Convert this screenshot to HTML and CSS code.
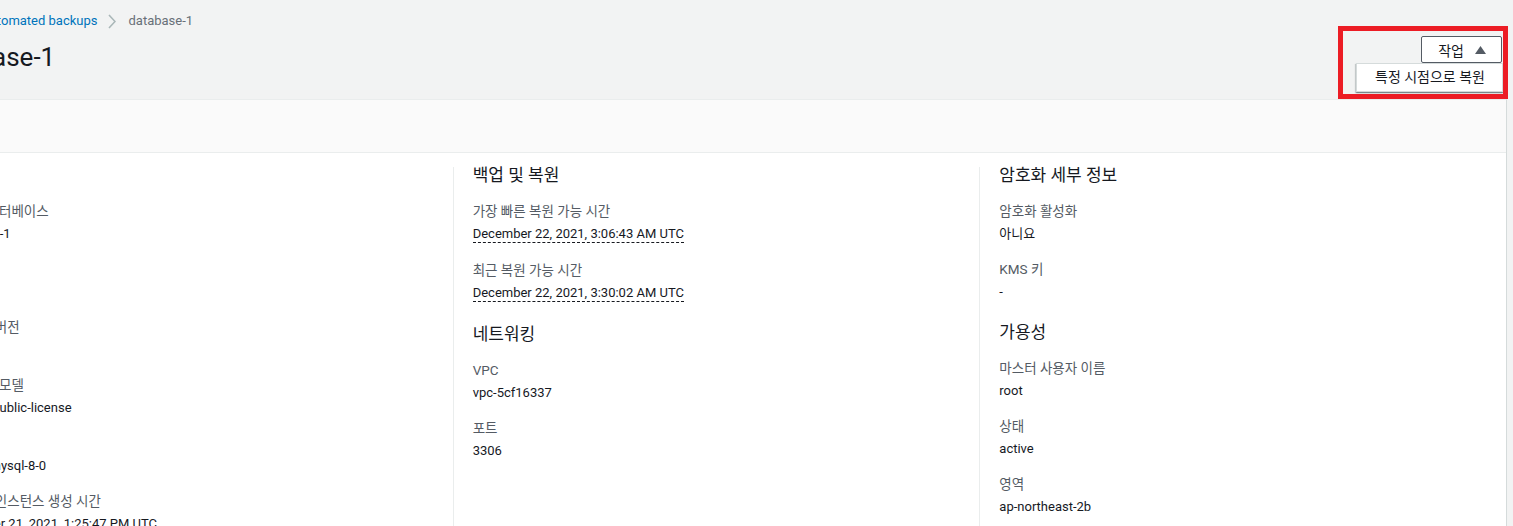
FILE: index.html
```html
<!DOCTYPE html>
<html lang="ko">
<head>
    <meta charset="UTF-8">
    <meta name="viewport" content="width=device-width, initial-scale=1.0">
    <title>database-1 - Automated backups</title>
    <link rel="stylesheet" href="styles.css">
</head>
<body>
<div class="page">

    <!-- Page header: breadcrumbs, title and actions -->
    <header class="page-header">
        <nav class="breadcrumbs">
            <a href="#">RDS</a>
            <svg class="crumb-sep" viewBox="0 0 8 15"><polyline points="1,1 7,7.5 1,14" /></svg>
            <a href="#">Automated backups</a>
            <svg class="crumb-sep" viewBox="0 0 8 15"><polyline points="1,1 7,7.5 1,14" /></svg>
            <span class="crumb-current">database-1</span>
        </nav>

        <div class="title-row">
            <h1>database-1</h1>
            <div class="actions">
                <button class="btn-dropdown">작업
                    <svg class="caret" viewBox="0 0 11 8"><polygon points="5.5,0 11,8 0,8" /></svg>
                </button>
                <ul class="dropdown-menu">
                    <li>특정 시점으로 복원</li>
                </ul>
                <div class="highlight-box"></div>
            </div>
        </div>
    </header>

    <!-- Summary card -->
    <section class="card">
        <div class="card-header">
            <h2>요약</h2>
        </div>
        <div class="card-body">

            <div class="column">
                <div class="section">
                    <h3>구성</h3>
                    <div class="item">
                        <div class="label">소스 데이터베이스</div>
                        <div class="value">database-1</div>
                    </div>
                    <div class="item">
                        <div class="label">엔진</div>
                        <div class="value">MySQL</div>
                    </div>
                    <div class="item">
                        <div class="label">DB 엔진 버전</div>
                        <div class="value">8.0.23</div>
                    </div>
                    <div class="item">
                        <div class="label">라이선스 모델</div>
                        <div class="value">general-public-license</div>
                    </div>
                    <div class="item">
                        <div class="label">옵션 그룹</div>
                        <div class="value">default:mysql-8-0</div>
                    </div>
                    <div class="item">
                        <div class="label">소스 DB 인스턴스 생성 시간</div>
                        <div class="value">December 21, 2021, 1:25:47 PM UTC</div>
                    </div>
                </div>
            </div>

            <div class="column">
                <div class="section">
                    <h3>백업 및 복원</h3>
                    <div class="item">
                        <div class="label">가장 빠른 복원 가능 시간</div>
                        <div class="value has-tip"><span class="tip">December 22, 2021, 3:06:43 AM UTC</span></div>
                    </div>
                    <div class="item">
                        <div class="label">최근 복원 가능 시간</div>
                        <div class="value has-tip"><span class="tip">December 22, 2021, 3:30:02 AM UTC</span></div>
                    </div>
                </div>
                <div class="section">
                    <h3>네트워킹</h3>
                    <div class="item">
                        <div class="label">VPC</div>
                        <div class="value">vpc-5cf16337</div>
                    </div>
                    <div class="item">
                        <div class="label">포트</div>
                        <div class="value">3306</div>
                    </div>
                </div>
            </div>

            <div class="column">
                <div class="section">
                    <h3>암호화 세부 정보</h3>
                    <div class="item">
                        <div class="label">암호화 활성화</div>
                        <div class="value">아니요</div>
                    </div>
                    <div class="item">
                        <div class="label">KMS 키</div>
                        <div class="value">-</div>
                    </div>
                </div>
                <div class="section">
                    <h3>가용성</h3>
                    <div class="item">
                        <div class="label">마스터 사용자 이름</div>
                        <div class="value">root</div>
                    </div>
                    <div class="item">
                        <div class="label">상태</div>
                        <div class="value">active</div>
                    </div>
                    <div class="item">
                        <div class="label">영역</div>
                        <div class="value">ap-northeast-2b</div>
                    </div>
                </div>
            </div>

        </div>
    </section>

</div>
</body>
</html>
```

FILE: styles.css
```css
html {
    overflow: hidden;
}

body {
    margin: 0;
    overflow: hidden;
    background-color: #f2f3f3;
    font-family: Roboto, "Noto Sans CJK KR", sans-serif;
    font-size: 13px;
    color: #16191f;
}

/* the console is scrolled to the right, so the page starts left of the window */
.page {
    margin: 0 6px 0 -74px;
}

.page-header {
    padding: 12px 5px 21px 0;
}

.breadcrumbs {
    display: flex;
    align-items: center;
    height: 18px;
    line-height: 18px;
    white-space: nowrap;
}

.breadcrumbs a {
    color: #0073bb;
    text-decoration: none;
}

.crumb-sep {
    width: 8px;
    height: 15px;
    margin: 0 13px 0 10px;
    fill: none;
    stroke: #aab7b8;
    stroke-width: 1.6;
}

.crumb-current {
    color: #687078;
}

.title-row {
    display: flex;
    justify-content: space-between;
    align-items: flex-start;
    margin-top: 6px;
}

h1 {
    margin: 0;
    font-size: 26px;
    font-weight: 400;
    line-height: 42px;
    white-space: nowrap;
}

.actions {
    position: relative;
}

.btn-dropdown {
    display: flex;
    align-items: center;
    gap: 11px;
    height: 27px;
    padding: 0 15px 0 16px;
    border: 1px solid #545b64;
    border-radius: 2px;
    background-color: #fff;
    color: #16191f;
    font-family: inherit;
    font-size: 14px;
    cursor: pointer;
}

.caret {
    width: 11px;
    height: 8px;
    fill: #545b64;
}

.dropdown-menu {
    position: absolute;
    top: 100%;
    right: -1px;
    width: 147px;
    box-sizing: border-box;
    margin: 0;
    padding: 0 0 0 18px;
    list-style: none;
    background-color: #fff;
    border: 1px solid #d5dbdb;
    font-size: 14px;
    line-height: 27px;
    white-space: nowrap;
    box-shadow: 0 1px 1px 0 rgba(0, 28, 36, 0.3), 1px 1px 1px 0 rgba(0, 28, 36, 0.15), -1px 1px 1px 0 rgba(0, 28, 36, 0.15);
}

/* red annotation around the actions menu */
.highlight-box {
    position: absolute;
    top: -10px;
    right: -6px;
    width: 170px;
    height: 73px;
    box-sizing: border-box;
    border: 5px solid #ec1c24;
    pointer-events: none;
}

.card {
    background-color: #fff;
    border-top: 1px solid #eaeded;
    border-right: 1px solid #d5dbdb;
}

.card-header {
    display: flex;
    align-items: center;
    height: 52px;
    padding: 0 20px;
    background-color: #fafafa;
    border-bottom: 1px solid #eaeded;
}

.card-header h2 {
    margin: 0;
    font-size: 16px;
    font-weight: 700;
}

.card-body {
    display: grid;
    grid-template-columns: repeat(3, 1fr);
    padding-top: 14px;
}

.column {
    padding: 0 19px 40px;
    border-left: 1px solid #eaeded;
    white-space: nowrap;
}

.column:first-child {
    border-left-color: transparent;
}

.section + .section {
    margin-top: 21px;
}

.section h3 {
    margin: 0 0 18px;
    font-size: 17px;
    font-weight: 400;
    line-height: 16px;
}

.item + .item {
    margin-top: 14px;
}

.label {
    color: #545b64;
    font-size: 13.5px;
    line-height: 20px;
}

.value {
    margin-top: 2px;
    line-height: 22px;
}

.value.has-tip {
    padding-bottom: 1px;
}

.tip {
    padding-bottom: 1px;
    border-bottom: 1px dashed #16191f;
}
```
